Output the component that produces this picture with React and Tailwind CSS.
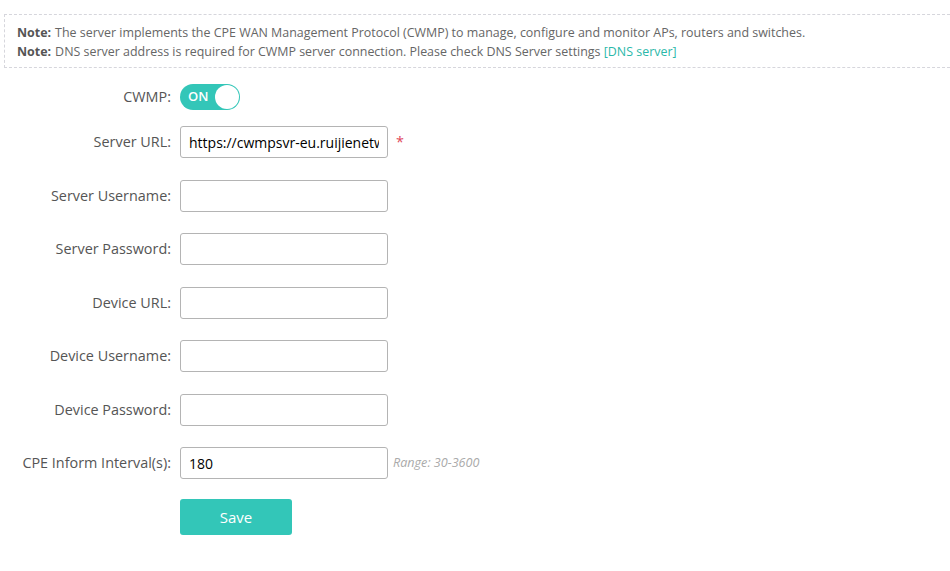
import React, { useState } from 'react';

const fields = [
  { label: 'Server URL:', value: 'https://cwmpsvr-eu.ruijienetworks.com/service/tr069servlet', required: true },
  { label: 'Server Username:', value: '' },
  { label: 'Server Password:', value: '' },
  { label: 'Device URL:', value: '' },
  { label: 'Device Username:', value: '' },
  { label: 'Device Password:', value: '' },
  { label: 'CPE Inform Interval(s):', value: '180', hint: 'Range: 30-3600' },
];

const Toggle = ({ on, onChange }) => (
  <button
    onClick={() => onChange(!on)}
    className={`relative flex h-[26px] w-[60px] items-center rounded-full ${on ? 'bg-[#33c6b8]' : 'bg-[#c8c8c8]'}`}
  >
    <span className="pl-[8px] text-[13px] font-semibold text-white">{on ? 'ON' : 'OFF'}</span>
    <span
      className={`absolute top-[1px] h-[24px] w-[24px] rounded-full bg-white ${on ? 'right-[1px]' : 'left-[1px]'}`}
    />
  </button>
);

const App = () => {
  const [cwmp, setCwmp] = useState(true);

  return (
    <div className="min-h-[571px] bg-white pt-[14px] font-['Open_Sans',sans-serif] text-[#555]">
      <div className="ml-[4px] mr-[-10px] border border-dashed border-[#d6d6dc] px-[12px] pt-[8px] pb-[6px] text-[12.45px] leading-[19px] text-[#666]">
        <p>
          <b className="mr-[4px] font-bold text-[#555]">Note:</b>
          The server implements the CPE WAN Management Protocol (CWMP) to manage, configure and monitor APs, routers and switches.
        </p>
        <p>
          <b className="mr-[4px] font-bold text-[#555]">Note:</b>
          DNS server address is required for CWMP server connection. Please check DNS Server settings{' '}
          <a href="#" className="text-[#2bb8a9]">[DNS server]</a>
        </p>
      </div>

      <div className="mt-[16px] flex flex-col text-[14.4px]">
        <div className="flex h-[26px] items-center gap-[9px]">
          <label className="w-[171px] text-right">CWMP:</label>
          <Toggle on={cwmp} onChange={setCwmp} />
        </div>

        <div className="mt-[16px] flex flex-col gap-[21.5px]">
          {fields.map((f) => (
            <div key={f.label} className="flex h-[32px] items-center gap-[9px]">
              <label className="w-[171px] shrink-0 text-right">{f.label}</label>
              <input
                defaultValue={f.value}
                className="h-[32px] w-[208px] rounded-[3px] border border-[#b4b4b4] px-[8px] text-[14px] text-black outline-none"
              />
              {f.required && <span className="-ml-[1px] text-[#e0465a]">*</span>}
              {f.hint && <span className="-ml-[4px] text-[12.6px] italic text-[#aaa]">{f.hint}</span>}
            </div>
          ))}
        </div>

        <div className="mt-[20px] flex">
          <div className="w-[180px]" />
          <button className="h-[36px] w-[112px] rounded-[3px] bg-[#33c6b8] text-[15px] text-white">Save</button>
        </div>
      </div>
    </div>
  );
};

export default App;
